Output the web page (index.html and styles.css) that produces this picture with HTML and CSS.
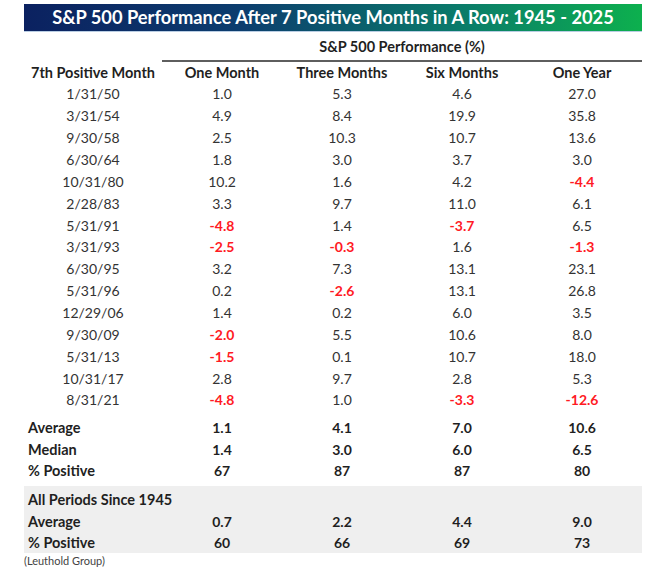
FILE: index.html
```html
<!DOCTYPE html>
<html>
<head>
<meta charset="utf-8">
<link rel="stylesheet" href="styles.css">
</head>
<body>
<div class="sheet">
  <div class="title">S&amp;P 500 Performance After 7 Positive Months in A Row: 1945 - 2025</div>
  <table class="perf">
    <colgroup><col class="c1"><col class="cn"><col class="cn"><col class="cn"><col class="cn"></colgroup>
    <thead>
      <tr class="group"><th></th><th colspan="4">S&amp;P 500 Performance (%)</th></tr>
      <tr class="heads"><th>7th Positive Month</th><th>One Month</th><th>Three Months</th><th>Six Months</th><th>One Year</th></tr>
    </thead>
    <tbody class="data">
      <tr><td>1/31/50</td><td>1.0</td><td>5.3</td><td>4.6</td><td>27.0</td></tr>
      <tr><td>3/31/54</td><td>4.9</td><td>8.4</td><td>19.9</td><td>35.8</td></tr>
      <tr><td>9/30/58</td><td>2.5</td><td>10.3</td><td>10.7</td><td>13.6</td></tr>
      <tr><td>6/30/64</td><td>1.8</td><td>3.0</td><td>3.7</td><td>3.0</td></tr>
      <tr><td>10/31/80</td><td>10.2</td><td>1.6</td><td>4.2</td><td class="neg">-4.4</td></tr>
      <tr><td>2/28/83</td><td>3.3</td><td>9.7</td><td>11.0</td><td>6.1</td></tr>
      <tr><td>5/31/91</td><td class="neg">-4.8</td><td>1.4</td><td class="neg">-3.7</td><td>6.5</td></tr>
      <tr><td>3/31/93</td><td class="neg">-2.5</td><td class="neg">-0.3</td><td>1.6</td><td class="neg">-1.3</td></tr>
      <tr><td>6/30/95</td><td>3.2</td><td>7.3</td><td>13.1</td><td>23.1</td></tr>
      <tr><td>5/31/96</td><td>0.2</td><td class="neg">-2.6</td><td>13.1</td><td>26.8</td></tr>
      <tr><td>12/29/06</td><td>1.4</td><td>0.2</td><td>6.0</td><td>3.5</td></tr>
      <tr><td>9/30/09</td><td class="neg">-2.0</td><td>5.5</td><td>10.6</td><td>8.0</td></tr>
      <tr><td>5/31/13</td><td class="neg">-1.5</td><td>0.1</td><td>10.7</td><td>18.0</td></tr>
      <tr><td>10/31/17</td><td>2.8</td><td>9.7</td><td>2.8</td><td>5.3</td></tr>
      <tr><td>8/31/21</td><td class="neg">-4.8</td><td>1.0</td><td class="neg">-3.3</td><td class="neg">-12.6</td></tr>
    </tbody>
    <tbody class="summary">
      <tr class="first"><td>Average</td><td>1.1</td><td>4.1</td><td>7.0</td><td>10.6</td></tr>
      <tr><td>Median</td><td>1.4</td><td>3.0</td><td>6.0</td><td>6.5</td></tr>
      <tr><td>% Positive</td><td>67</td><td>87</td><td>87</td><td>80</td></tr>
    </tbody>
    <tbody class="summary all">
      <tr class="first"><td colspan="5">All Periods Since 1945</td></tr>
      <tr><td>Average</td><td>0.7</td><td>2.2</td><td>4.4</td><td>9.0</td></tr>
      <tr class="last"><td>% Positive</td><td>60</td><td>66</td><td>69</td><td>73</td></tr>
    </tbody>
  </table>
  <div class="source">(Leuthold Group)</div>
</div>
</body>
</html>
```

FILE: styles.css
```css
html, body {
  margin: 0;
  padding: 0;
  background: #ffffff;
}

.sheet {
  width: 618px;
  margin: 4px 0 0 24px;
  font-family: "Lato", "Open Sans", sans-serif;
  color: #262626;
}

.title {
  height: 27px;
  line-height: 27px;
  text-align: center;
  color: #ffffff;
  font-weight: 700;
  font-size: 18.3px;
  white-space: nowrap;
  background: linear-gradient(90deg, #0b2160 0%, #0c3d6e 35%, #0a7a6a 70%, #0db04e 100%);
  border-bottom: 1px solid #b9cde3;
}

.perf {
  width: 618px;
  border-collapse: collapse;
  table-layout: fixed;
  font-size: 14px;
}

.c1 { width: 138px; }
.cn { width: 120px; }

.perf th, .perf td {
  padding: 0;
  text-align: center;
  white-space: nowrap;
}

.group th {
  height: 28px;
  font-weight: 700;
  font-size: 14.5px;
  color: #1f1f1f;
  vertical-align: middle;
}

.group th[colspan] {
  border-bottom: 2px solid #5e5e5e;
}

.heads th {
  height: 21px;
  font-weight: 700;
  font-size: 14.5px;
  color: #1f1f1f;
  vertical-align: middle;
}

.data td {
  height: 21.86px;
  font-weight: 400;
  color: #333333;
}

.data td.neg {
  color: #ff1a24;
  font-weight: 700;
}

.summary td {
  height: 21.6px;
  font-weight: 700;
  color: #1f1f1f;
}

.summary td:first-child {
  text-align: left;
  padding-left: 4px;
  font-size: 14.5px;
}

.summary .first td {
  padding-top: 6px;
}

.all {
  background: #efefef;
  border-top: 4px solid #ffffff;
}

.all .first td {
  padding-top: 3px;
}

.source {
  font-size: 11px;
  line-height: 14px;
  color: #444444;
  margin-top: 1px;
  font-family: "Lato", sans-serif;
}
```
